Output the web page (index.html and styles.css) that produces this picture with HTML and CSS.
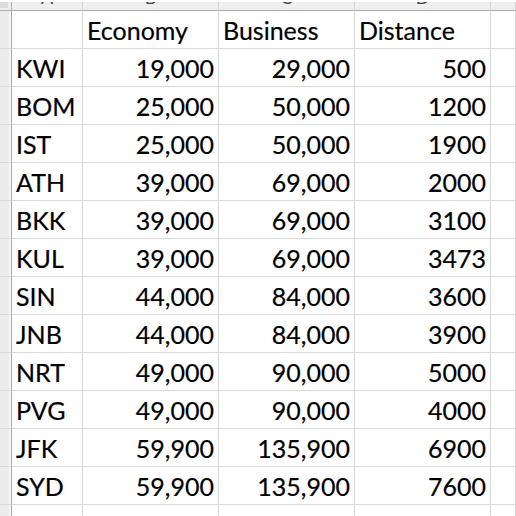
FILE: index.html
```html
<!DOCTYPE html>
<html>
<head>
<meta charset="utf-8">
<link rel="stylesheet" href="styles.css">
</head>
<body>
<div class="sheet">
  <div class="ch corner"></div>
  <div class="ch"><span class="letter">A</span></div>
  <div class="ch"><span class="letter">B</span></div>
  <div class="ch"><span class="letter">C</span></div>
  <div class="ch"><span class="letter">D</span></div>
  <div class="ch"></div>

  <div class="rh"></div><div class="c"></div><div class="c">Economy</div><div class="c">Business</div><div class="c">Distance</div><div class="c"></div>
  <div class="rh"></div><div class="c">KWI</div><div class="c num">19,000</div><div class="c num">29,000</div><div class="c num">500</div><div class="c"></div>
  <div class="rh"></div><div class="c">BOM</div><div class="c num">25,000</div><div class="c num">50,000</div><div class="c num">1200</div><div class="c"></div>
  <div class="rh"></div><div class="c">IST</div><div class="c num">25,000</div><div class="c num">50,000</div><div class="c num">1900</div><div class="c"></div>
  <div class="rh"></div><div class="c">ATH</div><div class="c num">39,000</div><div class="c num">69,000</div><div class="c num">2000</div><div class="c"></div>
  <div class="rh"></div><div class="c">BKK</div><div class="c num">39,000</div><div class="c num">69,000</div><div class="c num">3100</div><div class="c"></div>
  <div class="rh"></div><div class="c">KUL</div><div class="c num">39,000</div><div class="c num">69,000</div><div class="c num">3473</div><div class="c"></div>
  <div class="rh"></div><div class="c">SIN</div><div class="c num">44,000</div><div class="c num">84,000</div><div class="c num">3600</div><div class="c"></div>
  <div class="rh"></div><div class="c">JNB</div><div class="c num">44,000</div><div class="c num">84,000</div><div class="c num">3900</div><div class="c"></div>
  <div class="rh"></div><div class="c">NRT</div><div class="c num">49,000</div><div class="c num">90,000</div><div class="c num">5000</div><div class="c"></div>
  <div class="rh"></div><div class="c">PVG</div><div class="c num">49,000</div><div class="c num">90,000</div><div class="c num">4000</div><div class="c"></div>
  <div class="rh"></div><div class="c">JFK</div><div class="c num">59,900</div><div class="c num">135,900</div><div class="c num">6900</div><div class="c"></div>
  <div class="rh"></div><div class="c">SYD</div><div class="c num">59,900</div><div class="c num">135,900</div><div class="c num">7600</div><div class="c"></div>
  <div class="rh"></div><div class="c"></div><div class="c"></div><div class="c"></div><div class="c"></div><div class="c"></div>
</div>
</body>
</html>
```

FILE: styles.css
```css
html, body {
  margin: 0;
  padding: 0;
  background: #ffffff;
  overflow: hidden;
  width: 516px;
  height: 516px;
}

.sheet {
  display: grid;
  grid-template-columns: 12px 71px 136px 136px 136px 1fr;
  grid-auto-rows: 38px;
  grid-template-rows: 9px;
  padding-top: 2px;
  height: 514px;
  overflow: hidden;
  font-family: Lato, "Open Sans", sans-serif;
  font-size: 25px;
  color: #000000;
}

.ch {
  box-sizing: border-box;
  background: #efefef;
  border-right: 1px solid #d2d2d2;
  border-bottom: 1px solid #ababab;
  overflow: hidden;
  text-align: center;
  height: 9px;
}

.ch.corner {
  border-right: 1px solid #ababab;
  background: linear-gradient(to right, #dcdcdc 8px, #efefef 8px);
  background-size: 100% 6px;
  background-repeat: no-repeat;
  background-color: #efefef;
}

.letter {
  display: block;
  font-size: 18px;
  line-height: 18px;
  margin-top: -14px;
  color: #444444;
}

.rh {
  box-sizing: border-box;
  background: linear-gradient(to right, #ececec 9px, #f6f6f6 9px);
  border-right: 1px solid #ababab;
  border-bottom: 1px solid #d8d8d8;
}

.c {
  box-sizing: border-box;
  border-right: 1px solid #dadada;
  border-bottom: 1px solid #dadada;
  padding: 4px 4px 0 4px;
  line-height: 30px;
  white-space: nowrap;
  overflow: hidden;
  -webkit-text-stroke: 0.2px #000000;
}

.num {
  text-align: right;
}
```
